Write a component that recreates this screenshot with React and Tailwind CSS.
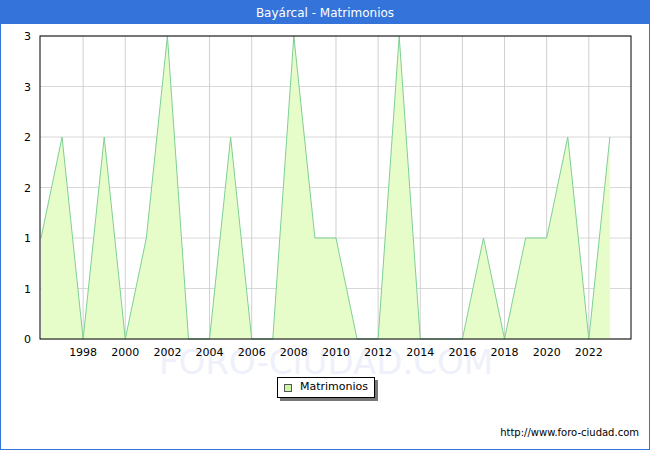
export default function App() {
  const data = [1,2,0,2,0,1,3,0,0,2,0,0,3,1,1,0,0,3,0,0,0,1,0,1,1,2,0,2];
  const X0 = 40, DX = 21.07, Y0 = 338, DY = 101;
  const px = i => X0 + i * DX;
  const py = v => Y0 - v * DY;
  const line = data.map((v, i) => `${px(i)},${py(v)}`).join(" ");
  const area = `${px(0)},${Y0} ${line} ${px(data.length - 1)},${Y0}`;
  const yl = ["3","3","2","2","1","1","0"];
  return (
    <div className="w-[650px] h-[450px] border border-[#3473d9] bg-white flex flex-col" style={{fontFamily:"'DejaVu Sans', sans-serif"}}>
      <div className="h-[23px] bg-[#3473d9] text-white text-[12px] flex items-center justify-center">Bayárcal - Matrimonios</div>
      <div className="relative flex-1">
        <svg width="648" height="425" className="absolute left-0 top-0" style={{fontFamily:"'DejaVu Sans', sans-serif"}}>
          <text x="325" y="350" textAnchor="middle" fontSize="34" fill="#eef0fa">FORO-CIUDAD.COM</text>
          {[0,1,2,3,4,5,6].map(k => (
            <line key={k} x1={X0-1} x2="630" y1={12+k*50.5} y2={12+k*50.5} stroke="#d8d8d8" />
          ))}
          {[1,2,3,4,5,6,7,8,9,10,11,12,13].map(k => (
            <line key={k} x1={px(2*k)} x2={px(2*k)} y1="12" y2="315" stroke="#d0d0d0" />
          ))}
          <g transform="translate(0,-23)">
            <polygon points={area} fill="#e6fdc9" />
            <polyline points={line} fill="none" stroke="#7fcf95" strokeWidth="1" />
          </g>
          <rect x={X0-1} y="12" width={631-X0} height="303" fill="none" stroke="#000" />
          {yl.map((t, k) => (
            <text key={k} x="30" y={16+k*50.5} textAnchor="end" fontSize="11" fill="#000">{t}</text>
          ))}
          {[1,2,3,4,5,6,7,8,9,10,11,12,13].map(k => (
            <text key={k} x={px(2*k)} y="332" textAnchor="middle" fontSize="11" fill="#000">{1996+2*k}</text>
          ))}
        </svg>
        <div className="absolute left-[276px] top-[353px] w-[98px] h-[21px] border border-black bg-white text-[11px] flex items-center gap-2 pl-[6px] shadow-[3px_3px_0_#777]">
          <div className="w-[8px] h-[8px] border border-[#555] bg-[#ccf5a6]" />
          <span>Matrimonios</span>
        </div>
        <div className="absolute right-[10px] bottom-[9px] text-[10px]">http://www.foro-ciudad.com</div>
      </div>
    </div>
  );
}
